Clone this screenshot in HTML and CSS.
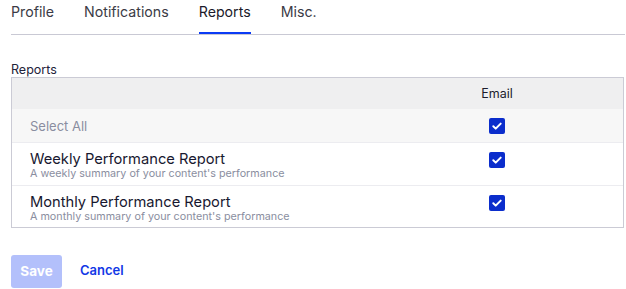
FILE: index.html
```html
<!DOCTYPE html>
<html>
<head>
<meta charset="utf-8">
<link rel="stylesheet" href="styles.css">
</head>
<body>
<div class="page">
  <nav class="tabs">
    <span class="tab">Profile</span>
    <span class="tab">Notifications</span>
    <span class="tab active">Reports</span>
    <span class="tab">Misc.</span>
  </nav>
  <div class="section-label">Reports</div>
  <div class="table">
    <div class="row head">
      <div class="cell name"></div>
      <div class="cell col">Email</div>
    </div>
    <div class="row select-all">
      <div class="cell name">Select All</div>
      <div class="cell col"><span class="check"><svg viewBox="0 0 16 16" width="16" height="16"><path d="M4.3 8.3l2.4 2.3 5-5" fill="none" stroke="#fff" stroke-width="2" stroke-linecap="round" stroke-linejoin="round"/></svg></span></div>
    </div>
    <div class="row item">
      <div class="cell name">
        <div class="title">Weekly Performance Report</div>
        <div class="sub">A weekly summary of your content's performance</div>
      </div>
      <div class="cell col top"><span class="check"><svg viewBox="0 0 16 16" width="16" height="16"><path d="M4.3 8.3l2.4 2.3 5-5" fill="none" stroke="#fff" stroke-width="2" stroke-linecap="round" stroke-linejoin="round"/></svg></span></div>
    </div>
    <div class="row item last">
      <div class="cell name">
        <div class="title">Monthly Performance Report</div>
        <div class="sub">A monthly summary of your content's performance</div>
      </div>
      <div class="cell col top"><span class="check"><svg viewBox="0 0 16 16" width="16" height="16"><path d="M4.3 8.3l2.4 2.3 5-5" fill="none" stroke="#fff" stroke-width="2" stroke-linecap="round" stroke-linejoin="round"/></svg></span></div>
    </div>
  </div>
  <div class="actions">
    <button class="btn-save" disabled>Save</button>
    <button class="btn-cancel">Cancel</button>
  </div>
</div>
</body>
</html>
```
FILE: styles.css
```css
* { box-sizing: border-box; }
html, body { margin: 0; padding: 0; background: #fff; }
body { font-family: Inter, "Noto Sans", sans-serif; color: #222; }
.page { padding: 0 1px 0 11px; }
.tabs {
  display: flex;
  gap: 30px;
  border-bottom: 1px solid #c9c9d4;
  height: 35px;
}
.tab {
  font-size: 14.2px;
  color: #3b3b46;
  padding-top: 3px;
  line-height: 17px;
  height: 34px;
}
.tab.active {
  color: #1b1b2a;
  border-bottom: 2px solid #0b3bf5;
  padding-bottom: 0;
}
.section-label {
  margin-top: 27px;
  font-size: 12.5px;
  line-height: 15px;
  color: #22223a;
}
.table {
  border: 1px solid #cbcbd5;
  width: 613px;
}
.row {
  display: grid;
  grid-template-columns: 1fr 252px;
}
.head { background: #efeff0; height: 31px; align-items: center; }
.head .col { font-size: 12.5px; color: #1c1c2c; }
.select-all { background: #f7f7f7; height: 33px; align-items: center; }
.select-all .name { padding-left: 18px; font-size: 13px; color: #8a8da0; }
.item { border-top: 1px solid #ececf0; height: 43px; }
.item.last { height: 42px; }
.cell.col { display: flex; justify-content: center; }
.cell.col.top { padding-top: 9px; }
.item .name { padding: 8px 0 0 18px; }
.title { font-size: 14.7px; line-height: 16px; color: #181830; }
.sub { font-size: 10.75px; line-height: 13px; color: #8a8ea0; }
.check {
  display: block;
  width: 16px;
  height: 16px;
  background: #0b2dcc;
  border-radius: 2px;
}
.check svg { display: block; }
.actions {
  margin-top: 27px;
  display: flex;
  align-items: center;
  gap: 18px;
}
.btn-save {
  width: 51px;
  height: 33px;
  border: 0;
  border-radius: 3px;
  background: #b3c0fb;
  color: #fff;
  font-family: Inter, sans-serif;
  font-weight: 700;
  font-size: 13.5px;
  padding: 0 0 1px;
}
.btn-cancel {
  border: 0;
  background: none;
  padding: 0 0 3px;
  font-family: Inter, sans-serif;
  font-weight: 600;
  font-size: 13px;
  color: #1238e6;
}
```
